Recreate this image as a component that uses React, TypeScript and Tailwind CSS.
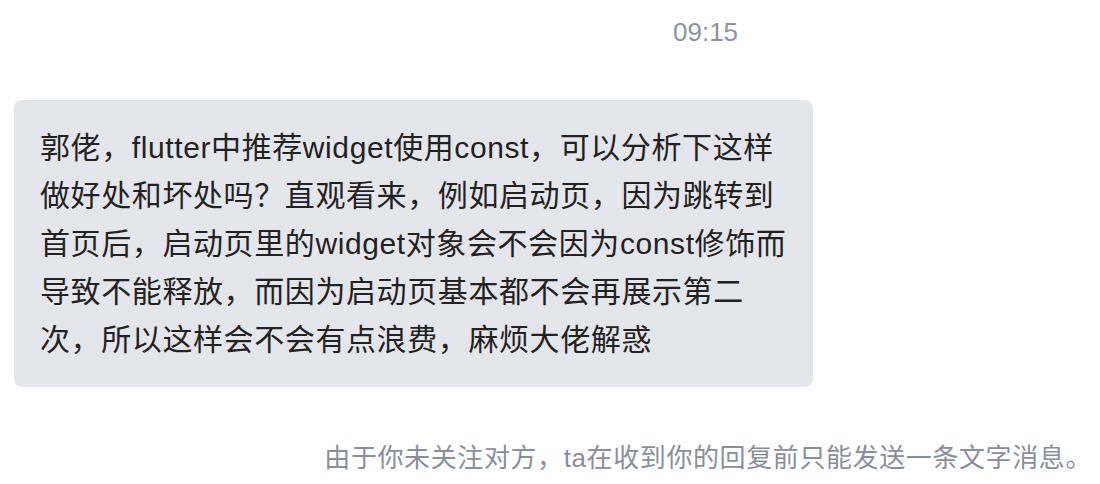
const lines = [
  "郭佬，flutter中推荐widget使用const，可以分析下这样",
  "做好处和坏处吗？直观看来，例如启动页，因为跳转到",
  "首页后，启动页里的widget对象会不会因为const修饰而",
  "导致不能释放，而因为启动页基本都不会再展示第二",
  "次，所以这样会不会有点浪费，麻烦大佬解惑",
];

const App = () => {
  return (
    <div className="w-[1100px] h-[484px] bg-white overflow-hidden font-['Liberation_Sans','Noto_Sans_CJK_SC',sans-serif]">
      <div className="pt-[17px] pl-[673px] text-[26px] leading-[30px] text-[#8e929b]">
        09:15
      </div>

      <div className="mt-[53px] ml-[14px] w-[799px] h-[287px] bg-[#e5e6eb] rounded-[8px] pl-[26px] pt-[24px]">
        {lines.map((line) => (
          <p
            key={line}
            className="text-[30px] leading-[48px] tracking-[0.6px] text-[#222222] whitespace-nowrap"
          >
            {line}
          </p>
        ))}
      </div>

      <div className="mt-[53px] flex justify-end pr-[8px]">
        <p className="text-[26px] leading-[36px] tracking-[0.6px] text-[#8a8e99] whitespace-nowrap">
          由于你未关注对方，ta在收到你的回复前只能发送一条文字消息。
        </p>
      </div>
    </div>
  );
};

export default App;
